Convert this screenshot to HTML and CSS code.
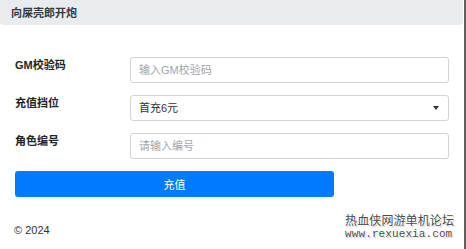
FILE: index.html
```html
<!DOCTYPE html>
<html lang="zh">
<head>
    <meta charset="UTF-8">
    <meta name="viewport" content="width=device-width, initial-scale=1.0">
    <title>向屎壳郎开炮</title>
    <link rel="stylesheet" href="styles.css">
</head>
<body>

<div class="frame">
    <div class="header">向屎壳郎开炮</div>

    <form class="form">
        <div class="form-row">
            <label for="gm">GM校验码</label>
            <input type="text" id="gm" placeholder="输入GM校验码">
        </div>
        <div class="form-row">
            <label for="level">充值挡位</label>
            <div class="select-wrap">
                <select id="level">
                    <option>首充6元</option>
                    <option>30元</option>
                    <option>68元</option>
                </select>
                <span class="caret"></span>
            </div>
        </div>
        <div class="form-row">
            <label for="role">角色编号</label>
            <input type="text" id="role" placeholder="请输入编号">
        </div>
        <button type="button" class="submit">充值</button>
    </form>

    <div class="footer">© 2024</div>

    <div class="watermark">
        <div class="wm-title">热血侠网游单机论坛</div>
        <div class="wm-url">www.rexuexia.com</div>
    </div>
</div>

</body>
</html>
```

FILE: styles.css
```css
body {
    margin: 0;
    font-family: "Liberation Sans", "Noto Sans CJK SC", sans-serif;
    font-size: 11px;
    color: #212529;
    background-color: #fff;
}

.frame {
    position: relative;
    box-sizing: border-box;
    height: 249px;
    width: 466px;
    border-right: 2px solid #5f5f5f;
}

.header {
    height: 25px;
    line-height: 26px;
    padding-left: 11px;
    margin-right: 1px;
    border-radius: 0 0 3px 3px;
    background-color: #e9ecef;
    font-weight: bold;
    color: #343a40;
}

.form {
    padding: 32px 15px 0 15px;
    width: 434px;
}

.form-row {
    display: flex;
    margin-bottom: 12px;
}

.form-row label {
    width: 115px;
    line-height: 16px;
    font-weight: bold;
    color: #212529;
}

input[type="text"],
select {
    box-sizing: border-box;
    width: 319px;
    height: 26px;
    margin: 0;
    padding: 0 8px;
    border: 1px solid #ced4da;
    border-radius: 3px;
    font-family: inherit;
    font-size: 11px;
    color: #333;
    background-color: #fff;
    outline: none;
}

input::placeholder {
    color: #9fa5ab;
}

.select-wrap {
    position: relative;
    width: 319px;
}

select {
    appearance: none;
    -webkit-appearance: none;
}

.caret {
    position: absolute;
    right: 10px;
    top: 11px;
    width: 0;
    height: 0;
    border-left: 3px solid transparent;
    border-right: 3px solid transparent;
    border-top: 4px solid #333;
}

.submit {
    display: block;
    width: 319px;
    height: 26px;
    margin-top: 1px;
    padding: 0;
    border: none;
    border-radius: 3px;
    background-color: #007bff;
    color: #fff;
    font-family: inherit;
    font-size: 11px;
    cursor: pointer;
}

.footer {
    padding: 27px 0 0 14px;
    color: #333;
}

.watermark {
    position: absolute;
    right: 10px;
    bottom: 9px;
    color: #4a4a4a;
    text-shadow: 1px 0 0 #fff, -1px 0 0 #fff, 0 1px 0 #fff, 0 -1px 0 #fff, 1px 1px 1px #999;
}

.wm-title {
    font-size: 12px;
    line-height: 16px;
    letter-spacing: 0.1px;
}

.wm-url {
    font-family: "Liberation Mono", monospace;
    font-size: 11px;
    line-height: 11px;
    letter-spacing: 0.1px;
}
```
